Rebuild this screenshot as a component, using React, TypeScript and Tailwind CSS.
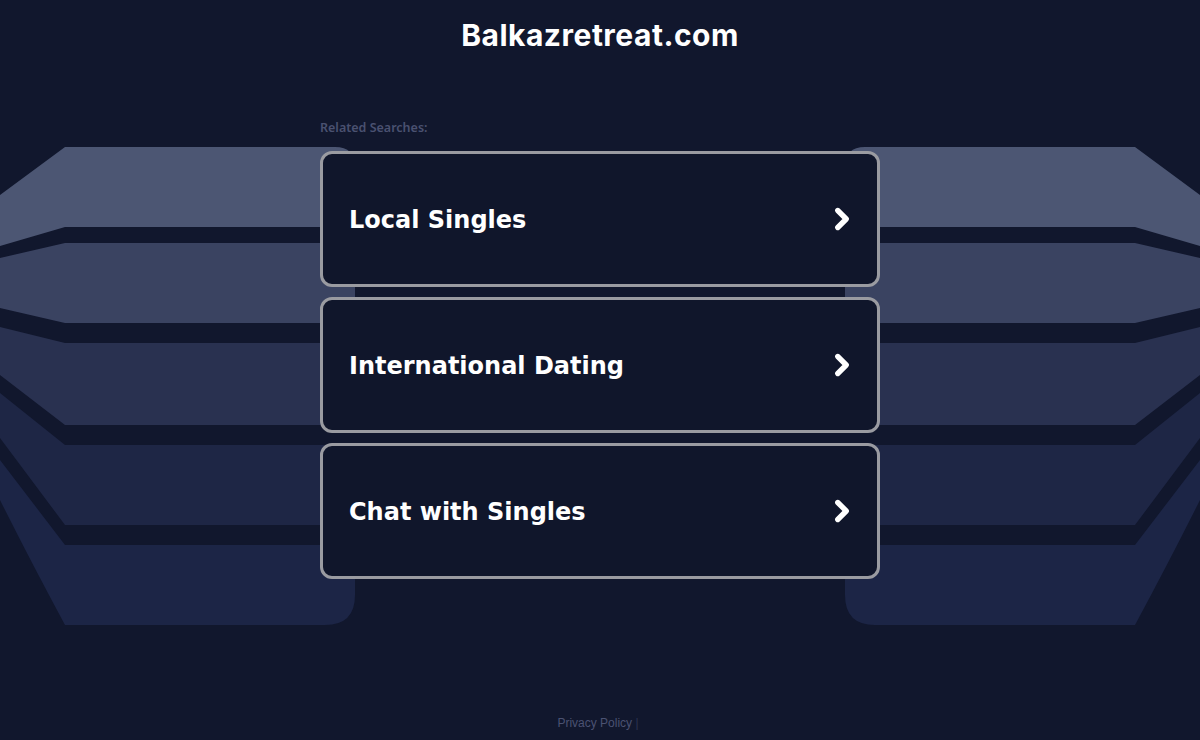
import { ChevronRight } from 'lucide-react';

const links = ['Local Singles', 'International Dating', 'Chat with Singles'];

// left half of the backdrop; the right half is its mirror image
const bands = [
  { fill: '#4c5673', d: 'M65 147 H335 Q355 147 355 167 V227 H65 L0 246 V195 Z' },
  { fill: '#3a4361', d: 'M65 243 H355 V323 H65 L0 308 V258 Z' },
  { fill: '#293150', d: 'M65 343 H355 V425 H65 L0 375 V327 Z' },
  { fill: '#1e2645', d: 'M65 445 H355 V525 H65 L0 438 V393 Z' },
  { fill: '#1c2546', d: 'M65 545 H355 V595 Q355 625 325 625 H65 Q30 560 0 500 V460 Z' },
];

function Backdrop() {
  return (
    <svg className="absolute inset-0 w-full h-full" viewBox="0 0 1200 740" preserveAspectRatio="none">
      {bands.map((b) => (
        <path key={b.d} d={b.d} fill={b.fill} />
      ))}
      <g transform="translate(1200 0) scale(-1 1)">
        {bands.map((b) => (
          <path key={b.d} d={b.d} fill={b.fill} />
        ))}
      </g>
    </svg>
  );
}

export default function App() {
  return (
    <div className="relative h-[740px] w-full overflow-hidden bg-[#11172d]">
      <Backdrop />
      <div className="relative flex h-full flex-col items-center">
        <h1 className="pt-[17px] text-[30px] leading-[36px] font-bold text-white font-['Inter',sans-serif] tracking-[0.5px]">
          Balkazretreat.com
        </h1>

        <div className="mt-[67px] w-[560px]">
          <div className="mb-[15px] text-[12.5px] leading-4 font-semibold text-[#4a5170] font-['Noto_Sans',sans-serif]">
            Related Searches:
          </div>
          <div className="flex flex-col gap-[10px]">
            {links.map((label) => (
              <a
                key={label}
                href="#"
                className="flex h-[136px] items-center justify-between rounded-[12px] border-[3px] border-[#9a9ba1] bg-[#10162b] pl-[26px] pr-[18px]"
              >
                <span className="pt-[2px] text-[24px] font-bold text-white font-['DejaVu_Sans',sans-serif]">
                  {label}
                </span>
                <ChevronRight size={34} strokeWidth={3.75} className="text-white" />
              </a>
            ))}
          </div>
        </div>

        <footer className="mt-auto pb-[9px] pr-[4px] text-[12px] leading-4 text-[#4b5272] font-['Liberation_Sans',Arial,sans-serif]">
          Privacy Policy <span className="text-[#2c3350]">|</span>
        </footer>
      </div>
    </div>
  );
}
